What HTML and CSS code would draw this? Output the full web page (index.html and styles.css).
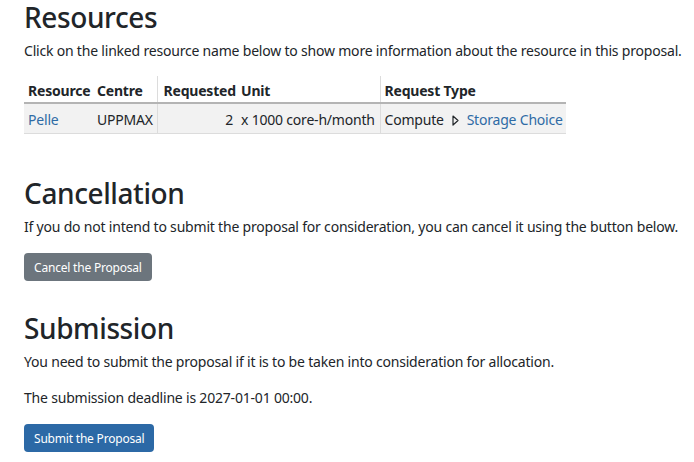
FILE: index.html
```html
<!DOCTYPE html>
<html lang="en">
<head>
  <meta charset="UTF-8" />
  <title>Proposal</title>
  <link rel="stylesheet" href="styles.css">
</head>
<body>

<div class="page">

  <!-- Resources -->
  <section class="block block-first">
    <h2>Resources</h2>
    <p class="intro">Click on the linked resource name below to show more information about the resource in this proposal.</p>
    <table class="resources">
      <thead>
        <tr>
          <th class="c-res">Resource</th>
          <th class="c-centre">Centre</th>
          <th class="c-req sep">Requested</th>
          <th class="c-unit">Unit</th>
          <th class="c-type sep">Request Type</th>
        </tr>
      </thead>
      <tbody>
        <tr>
          <td class="c-res"><a href="#">Pelle</a></td>
          <td class="c-centre">UPPMAX</td>
          <td class="c-req sep num">2</td>
          <td class="c-unit">x 1000 core-h/month</td>
          <td class="c-type sep">Compute <svg class="tri" width="7" height="11" viewBox="0 0 7 11"><path d="M1 1 L6 5.5 L1 10 Z" fill="none" stroke="#212529" stroke-width="1.2" stroke-linejoin="round"/></svg> <a href="#">Storage Choice</a></td>
        </tr>
      </tbody>
    </table>
  </section>

  <!-- Cancellation -->
  <section class="block block-cancel">
    <h2>Cancellation</h2>
    <p>If you do not intend to submit the proposal for consideration, you can cancel it using the button below.</p>
    <button class="btn btn-grey">Cancel the Proposal</button>
  </section>

  <!-- Submission -->
  <section class="block block-submit">
    <h2>Submission</h2>
    <p>You need to submit the proposal if it is to be taken into consideration for allocation.</p>
    <p>The submission deadline is 2027-01-01 00:00.</p>
    <button class="btn btn-blue">Submit the Proposal</button>
  </section>

</div>

</body>
</html>
```

FILE: styles.css
```css
body {
  margin: 0;
  padding: 0;
  background-color: #fff;
  color: #212529;
  font-family: "Noto Sans", "Open Sans", sans-serif;
  font-size: 14px;
  line-height: 20px;
  letter-spacing: -0.2px;
}
.page {
  padding: 0 4px 0 24px;
}
a {
  color: #2f6ba5;
  text-decoration: none;
}

h2 {
  font-size: 28px;
  font-weight: 500;
  line-height: 34px;
  letter-spacing: -0.4px;
  margin: 0 0 7px 0;
}
p {
  margin: 0 0 16px 0;
}

.block-first {
  margin-top: 0;
}
.intro {
  margin-bottom: 15px;
}
.block-cancel {
  margin-top: 42px;
}
.block-submit {
  margin-top: 30px;
}

table.resources {
  border-collapse: collapse;
  table-layout: fixed;
  width: 542px;
}
.resources th, .resources td {
  box-sizing: border-box;
  padding: 0 4px;
  text-align: left;
  white-space: nowrap;
}
.resources th {
  font-weight: bold;
  padding-top: 5px;
  padding-bottom: 1px;
  border-bottom: 2px solid #b4b4b4;
}
.resources td {
  padding-top: 6px;
  padding-bottom: 3px;
  background-color: #f2f2f2;
  border-bottom: 1px solid #dcdcdc;
}
.resources .sep {
  border-left: 1px solid #dcdcdc;
}
.resources .c-res { width: 69px; }
.resources .c-centre { width: 64px; }
.resources .c-req { width: 80px; padding-left: 6px; }
.resources .c-unit { width: 143px; }
.resources .c-type { width: 186px; }
.resources .num {
  text-align: right;
}
.tri {
  vertical-align: -1px;
  margin: 0 4px 0 5px;
}

.btn {
  display: block;
  border: none;
  border-radius: 4px;
  color: #fff;
  font-family: inherit;
  font-size: 12px;
  letter-spacing: -0.2px;
  padding: 0 10px;
  height: 28px;
  cursor: pointer;
}
.btn-grey {
  background-color: #6c757d;
}
.btn-blue {
  background-color: #2c69a6;
}
```
